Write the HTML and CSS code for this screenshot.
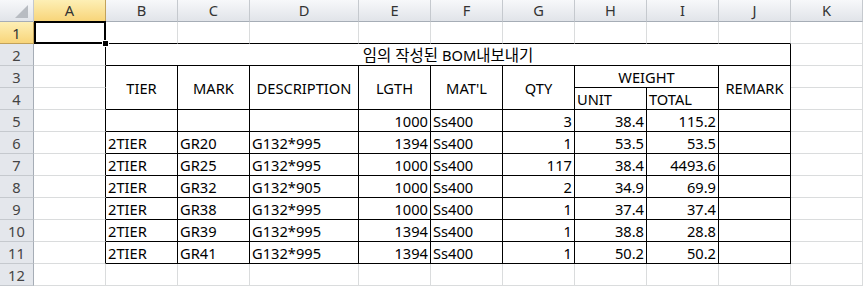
FILE: index.html
```html
<!DOCTYPE html>
<html>
  <head>
    <title>BOM</title>
    <link rel="stylesheet" href="styles.css">
  </head>
  <body>
    <div class="sheet">
      <div class="ch corner"></div>
      <div class="ch sel">A</div>
      <div class="ch">B</div>
      <div class="ch">C</div>
      <div class="ch">D</div>
      <div class="ch">E</div>
      <div class="ch">F</div>
      <div class="ch">G</div>
      <div class="ch">H</div>
      <div class="ch">I</div>
      <div class="ch">J</div>
      <div class="ch">K</div>

      <div class="rh sel">1</div>
      <div class="c active"></div>
      <div class="c tb"></div><div class="c tb"></div><div class="c tb"></div><div class="c tb"></div><div class="c tb"></div>
      <div class="c tb"></div><div class="c tb"></div><div class="c tb"></div><div class="c tb"></div>
      <div class="c"></div>

      <div class="rh">2</div>
      <div class="c lb"></div>
      <div class="c b mid title"><span class="ko">임의 작성된</span> BOM<span class="ko">내보내기</span></div>
      <div class="c"></div>

      <div class="rh">3</div>
      <div class="c lb"></div>
      <div class="c b mid tall">TIER</div>
      <div class="c b mid tall">MARK</div>
      <div class="c b mid tall">DESCRIPTION</div>
      <div class="c b mid tall">LGTH</div>
      <div class="c b mid tall">MAT'L</div>
      <div class="c b mid tall">QTY</div>
      <div class="c b mid wide">WEIGHT</div>
      <div class="c b mid tall">REMARK</div>
      <div class="c"></div>

      <div class="rh">4</div>
      <div class="c lb"></div>
      <div class="c b">UNIT</div>
      <div class="c b">TOTAL</div>
      <div class="c"></div>

      <div class="rh">5</div>
      <div class="c lb"></div>
      <div class="c b"></div>
      <div class="c b"></div>
      <div class="c b"></div>
      <div class="c b num">1000</div>
      <div class="c b">Ss400</div>
      <div class="c b num">3</div>
      <div class="c b num">38.4</div>
      <div class="c b num">115.2</div>
      <div class="c b"></div>
      <div class="c"></div>

      <div class="rh">6</div>
      <div class="c lb"></div>
      <div class="c b">2TIER</div>
      <div class="c b">GR20</div>
      <div class="c b">G132*995</div>
      <div class="c b num">1394</div>
      <div class="c b">Ss400</div>
      <div class="c b num">1</div>
      <div class="c b num">53.5</div>
      <div class="c b num">53.5</div>
      <div class="c b"></div>
      <div class="c"></div>

      <div class="rh">7</div>
      <div class="c lb"></div>
      <div class="c b">2TIER</div>
      <div class="c b">GR25</div>
      <div class="c b">G132*995</div>
      <div class="c b num">1000</div>
      <div class="c b">Ss400</div>
      <div class="c b num">117</div>
      <div class="c b num">38.4</div>
      <div class="c b num">4493.6</div>
      <div class="c b"></div>
      <div class="c"></div>

      <div class="rh">8</div>
      <div class="c lb"></div>
      <div class="c b">2TIER</div>
      <div class="c b">GR32</div>
      <div class="c b">G132*905</div>
      <div class="c b num">1000</div>
      <div class="c b">Ss400</div>
      <div class="c b num">2</div>
      <div class="c b num">34.9</div>
      <div class="c b num">69.9</div>
      <div class="c b"></div>
      <div class="c"></div>

      <div class="rh">9</div>
      <div class="c lb"></div>
      <div class="c b">2TIER</div>
      <div class="c b">GR38</div>
      <div class="c b">G132*995</div>
      <div class="c b num">1000</div>
      <div class="c b">Ss400</div>
      <div class="c b num">1</div>
      <div class="c b num">37.4</div>
      <div class="c b num">37.4</div>
      <div class="c b"></div>
      <div class="c"></div>

      <div class="rh">10</div>
      <div class="c lb"></div>
      <div class="c b">2TIER</div>
      <div class="c b">GR39</div>
      <div class="c b">G132*995</div>
      <div class="c b num">1394</div>
      <div class="c b">Ss400</div>
      <div class="c b num">1</div>
      <div class="c b num">38.8</div>
      <div class="c b num">28.8</div>
      <div class="c b"></div>
      <div class="c"></div>

      <div class="rh">11</div>
      <div class="c lb"></div>
      <div class="c b">2TIER</div>
      <div class="c b">GR41</div>
      <div class="c b">G132*995</div>
      <div class="c b num">1394</div>
      <div class="c b">Ss400</div>
      <div class="c b num">1</div>
      <div class="c b num">50.2</div>
      <div class="c b num">50.2</div>
      <div class="c b"></div>
      <div class="c"></div>

      <div class="rh">12</div>
      <div class="c"></div>
      <div class="c"></div><div class="c"></div><div class="c"></div><div class="c"></div><div class="c"></div>
      <div class="c"></div><div class="c"></div><div class="c"></div><div class="c"></div>
      <div class="c"></div>
    </div>
  </body>
</html>
```

FILE: styles.css
```css
body {
  margin: 0;
  padding: 0;
  background-color: #fff;
  font-family: "Noto Sans", "Noto Sans CJK KR", sans-serif;
  font-size: 14.67px;
  color: #000;
  overflow: hidden;
}

.sheet {
  display: grid;
  grid-template-columns: 34px 72px 72px 72px 109px repeat(6, 72px) 1fr;
  grid-auto-rows: 22px;
  width: 863px;
}

.ch,
.rh {
  box-sizing: border-box;
  background-image: linear-gradient(#f7f8fa, #e1e4e9);
  color: #333;
  font-size: 14.67px;
  display: flex;
  align-items: center;
  justify-content: center;
  border-right: 1px solid #c5c9ce;
  border-bottom: 1px solid #c5c9ce;
}

.ch {
  border-bottom-color: #a6adb6;
  line-height: 21px;
}

.rh {
  background-image: none;
  background-color: #e4e7ec;
  border-right-color: #a6adb6;
  color: #444;
}

.ch.sel,
.rh.sel {
  background-image: linear-gradient(#fdefb5, #f8d57a);
  border-right-color: #c2a25a;
  border-bottom-color: #c2a25a;
  color: #333;
}

.corner {
  position: relative;
}

.corner::after {
  content: "";
  position: absolute;
  right: 5px;
  bottom: 3px;
  width: 0;
  height: 0;
  border-left: 13px solid transparent;
  border-bottom: 13px solid #b8bcc2;
}

.c {
  box-sizing: border-box;
  border-right: 1px solid #dadcdd;
  border-bottom: 1px solid #dadcdd;
  padding: 0 2px;
  line-height: 22px;
  white-space: nowrap;
  overflow: hidden;
}

.c.b {
  border-right-color: #000;
  border-bottom-color: #000;
}

.c.lb {
  border-right-color: #000;
}

.c.tb {
  border-bottom-color: #000;
}

.c.num {
  text-align: right;
}

.c.mid {
  text-align: center;
}

.c.title {
  grid-column: span 9;
}

.ko {
  font-size: 15.5px;
}

.c.tall {
  grid-row: span 2;
  display: flex;
  align-items: center;
  justify-content: center;
}

.c.wide {
  grid-column: span 2;
}

.c.active {
  position: relative;
  overflow: visible;
}

.c.active::after {
  content: "";
  position: absolute;
  top: -1px;
  left: 0;
  right: -1px;
  bottom: -1px;
  border: 2px solid #000;
}

.c.active::before {
  content: "";
  position: absolute;
  right: -4px;
  bottom: -4px;
  width: 5px;
  height: 5px;
  background-color: #000;
  border: 1px solid #fff;
  z-index: 1;
}
```
